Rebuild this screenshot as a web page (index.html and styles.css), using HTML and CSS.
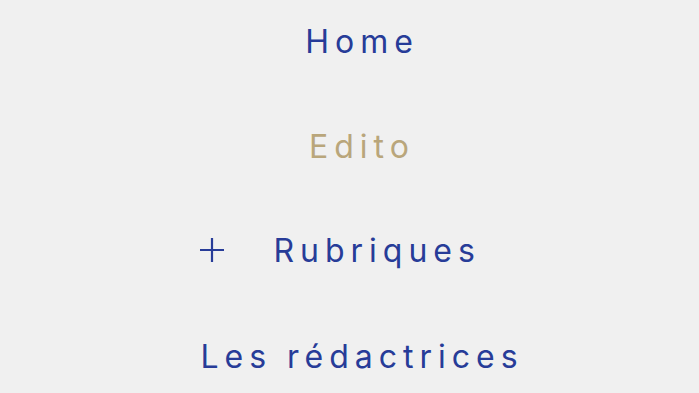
FILE: index.html
```html
<!DOCTYPE html>
<html>
    <head>
        <link rel="stylesheet" href="styles.css">
    </head>
    <body>
        <ul class="menu">
            <li class="item"><a href="#">Home</a></li>
            <li class="item current"><a href="#">Edito</a></li>
            <li class="item sub">
                <svg class="plus" width="24" height="24" viewBox="0 0 24 24">
                    <path d="M12 0V24M0 12H24" stroke="#273c98" stroke-width="2.2" fill="none"/>
                </svg>
                <a href="#">Rubriques</a>
            </li>
            <li class="item"><a href="#">Les rédactrices</a></li>
        </ul>
    </body>
</html>
```

FILE: styles.css
```css
html, body {
    margin: 0;
    background: #f0f0f0;
}
.menu {
    list-style: none;
    margin: 0 auto;
    padding: 22px 0 0 25px;
    width: fit-content;
    font-family: Inter, "Liberation Sans", sans-serif;
    font-weight: 400;
    font-size: 32px;
    letter-spacing: 6px;
}
.item {
    height: 105px;
    text-align: center;
}
.item a {
    color: #273c98;
    text-decoration: none;
}
.current a {
    color: #b9a67b;
}
.sub {
    display: flex;
    align-items: center;
    height: 36px;
    margin-bottom: 69px;
    text-align: left;
}
.plus {
    margin-right: 49px;
}
```
